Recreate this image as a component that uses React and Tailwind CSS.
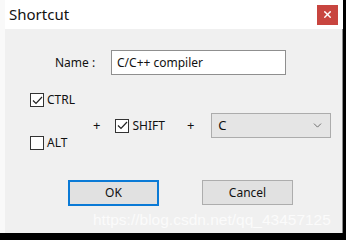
import { ChevronDown, X } from "lucide-react";

function Check({ checked }) {
  return (
    <span className="flex h-[14px] w-[14px] items-center justify-center border border-[#333] bg-white">
      {checked && (
        <svg width="11" height="9" viewBox="0 0 11 9" fill="none">
          <path d="M1 4.5 L4 7.5 L10 1" stroke="#222" strokeWidth="1.2" />
        </svg>
      )}
    </span>
  );
}

function CheckLabel({ checked, label }) {
  return (
    <div className="flex items-center gap-[3px]">
      <Check checked={checked} />
      <span className="text-[12px] leading-none text-[#111]">{label}</span>
    </div>
  );
}

export default function App() {
  return (
    <div className="flex h-[240px] w-[346px] flex-col bg-black font-['Noto_Sans','Noto_Sans_CJK_SC',sans-serif]">
      <div className="flex h-[233px] w-[343px] flex-col border-l-[5px] border-[#f9f9f9] bg-[#f0f0f0] shadow-[inset_-1px_0_0_#8a8a8a]">
        <div className="flex h-[29px] items-center justify-between bg-white pl-[4px] pr-[5px]">
          <span className="text-[15px] text-[#111]">Shortcut</span>
          <span className="flex h-[20px] w-[21px] items-center justify-center bg-[#c8453f]">
            <X size={11} strokeWidth={3} color="#fff" />
          </span>
        </div>

        <div className="flex flex-1 flex-col pr-[1px]">
          <div className="mt-[21px] flex items-center">
            <span className="ml-[50px] w-[56px] text-[12px] text-[#111]">Name :</span>
            <div className="flex h-[25px] w-[175px] items-center border border-[#8f8f8f] bg-white px-[5px] text-[12px] text-[#111]">
              C/C++ compiler
            </div>
          </div>

          <div className="mt-[17px] flex">
            <div className="ml-[25px] flex flex-col gap-[29px] pt-[1px]">
              <CheckLabel checked label="CTRL" />
              <CheckLabel checked={false} label="ALT" />
            </div>
            <div className="ml-[18px] mt-[25px] flex h-[17px] items-center">
              <span className="text-[13px] text-[#111]">+</span>
              <div className="ml-[15px]">
                <CheckLabel checked label="SHIFT" />
              </div>
              <span className="ml-[22px] text-[13px] text-[#111]">+</span>
              <div className="ml-[17px] flex h-[25px] w-[120px] items-center justify-between border border-[#acacac] bg-[#e5e5e5] pl-[6px] pr-[6px] text-[13px] text-[#111]">
                <span>C</span>
                <ChevronDown size={13} strokeWidth={1.5} color="#555" />
              </div>
            </div>
          </div>

          <div className="mt-[30px] flex">
            <button className="ml-[63px] h-[26px] w-[91px] border-2 border-[#0a7ad6] bg-[#e1e1e1] text-[12px] text-[#111]">
              OK
            </button>
            <button className="ml-[43px] h-[25px] w-[91px] border border-[#adadad] bg-[#e1e1e1] text-[12px] text-[#111]">
              Cancel
            </button>
          </div>

          <div className="mt-[2px] whitespace-nowrap pl-[88px] font-['Liberation_Sans',sans-serif] text-[15.5px] leading-[24px] text-[#fbfbfb]">
            https://blog.csdn.net/qq_43457125
          </div>
        </div>
      </div>
    </div>
  );
}
